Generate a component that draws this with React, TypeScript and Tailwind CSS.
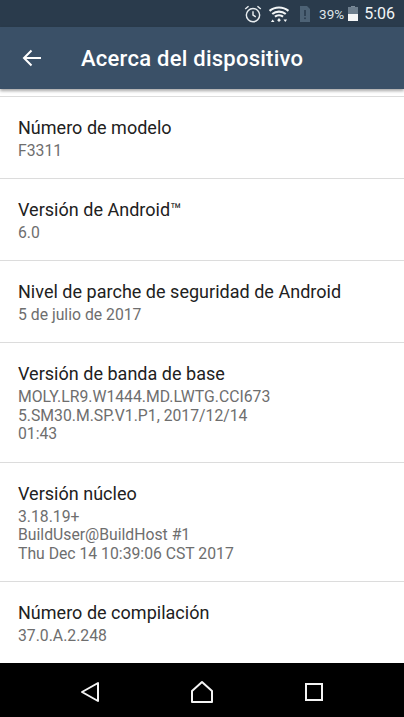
import React from 'react';

const rows = [
  { title: 'Número de modelo', lines: ['F3311'] },
  { title: 'Versión de Android™', lines: ['6.0'] },
  { title: 'Nivel de parche de seguridad de Android', lines: ['5 de julio de 2017'] },
  { title: 'Versión de banda de base', lines: ['MOLY.LR9.W1444.MD.LWTG.CCI673', '5.SM30.M.SP.V1.P1, 2017/12/14', '01:43'] },
  { title: 'Versión núcleo', lines: ['3.18.19+', 'BuildUser@BuildHost #1', 'Thu Dec 14 10:39:06 CST 2017'] },
  { title: 'Número de compilación', lines: ['37.0.A.2.248'] },
];

const StatusBar = () => (
  <div className="h-[27px] bg-[#2a3b4c] flex items-center justify-end pr-[9px] shrink-0">
    <svg width="20" height="20" viewBox="0 0 18 18" fill="none" stroke="#e8edf0" strokeWidth="1.300" className="mr-[5px]">
      <circle cx="9" cy="10" r="6" />
      <path d="M9 6.500V10l2.500 1.500M2 4.500 5 2M16 4.500 13 2" />
    </svg>
    <svg width="22" height="18" viewBox="0 0 24 20" fill="none" stroke="#f2f5f6" strokeWidth="2.400" className="mr-[9px]">
      <path d="M1.500 6.500c6-5 15-5 21 0M4.500 10c4.200-3.500 10.800-3.500 15 0M7.500 13c2.500-2 6.500-2 9 0" />
      <path d="M12 14.500l2 2.500-2 2-2-2z" fill="#f2f5f6" stroke="none" />
      <path d="M3 19l2-3 2 3zM17 16l2 3 2-3z" fill="#f2f5f6" stroke="none" />
    </svg>
    <svg width="12" height="18" viewBox="0 0 12 18" className="mr-[8px]">
      <path d="M1 1h7l3 3v13H1z" fill="#4d6275" />
      <rect x="5.200" y="5" width="1.600" height="6" fill="#2a3b4c" />
      <rect x="5.200" y="12.500" width="1.600" height="1.600" fill="#2a3b4c" />
    </svg>
    <span className="text-[13.500px] text-[#dfe5e9] mr-[4px] pt-[1px]">39%</span>
    <div className="w-[10px] h-[15px] mr-[6px] flex flex-col items-center">
      <div className="w-[4px] h-[1px] bg-[#7d8c99]" />
      <div className="w-full h-[7px] bg-[#6d7e8d]" />
      <div className="w-full h-[7px] bg-[#f4f6f7]" />
    </div>
    <span className="text-[16px] text-[#f2f5f6]">5:06</span>
  </div>
);

const Toolbar = () => (
  <div className="h-[62px] bg-[#3a5067] flex items-center shrink-0 shadow-[0_2px_3px_rgba(0,0,0,0.35)] z-10">
    <svg width="20" height="18" viewBox="0 0 20 18" fill="none" stroke="#fff" strokeWidth="2" className="ml-[22px]">
      <path d="M19 9H2M9.500 1.500 2 9l7.500 7.500" />
    </svg>
    <span className="ml-[39px] text-[22px] font-medium text-white tracking-[0.25px]">Acerca del dispositivo</span>
  </div>
);

const NavBar = () => (
  <div className="h-[54px] bg-black flex items-center shrink-0 pt-[4px]">
    <svg width="20" height="24" viewBox="0 0 20 24" fill="none" stroke="#f4f4f4" strokeWidth="2" className="ml-[80px]">
      <path d="M18 3v18L2 12z" strokeLinejoin="round" />
    </svg>
    <svg width="24" height="24" viewBox="0 0 24 24" fill="none" stroke="#f4f4f4" strokeWidth="2" className="ml-[90px]">
      <path d="M2 22V11L12 2l10 9v11z" strokeLinejoin="round" />
    </svg>
    <svg width="20" height="20" viewBox="0 0 20 20" fill="none" stroke="#f4f4f4" strokeWidth="2" className="ml-[90px]">
      <rect x="2" y="2" width="16" height="16" />
    </svg>
  </div>
);

export default function App() {
  return (
    <div className="w-[404px] h-[717px] flex flex-col bg-white overflow-hidden font-['Roboto',sans-serif]">
      <StatusBar />
      <Toolbar />
      <div className="flex-1 min-h-0 pt-[6.500px]">
        {rows.map((row) => (
          <div key={row.title} className="border-t border-[#dcdcdc] pl-[18px] pt-[17px] pb-[17.800px]">
            <div className="text-[18px] leading-[28px] text-[#212121] tracking-[0.02px]">{row.title}</div>
            <div className="text-[15.750px] leading-[18.500px] text-[#6e6e6e]">
              {row.lines.map((line) => (
                <div key={line}>{line}</div>
              ))}
            </div>
          </div>
        ))}
      </div>
      <NavBar />
    </div>
  );
}
